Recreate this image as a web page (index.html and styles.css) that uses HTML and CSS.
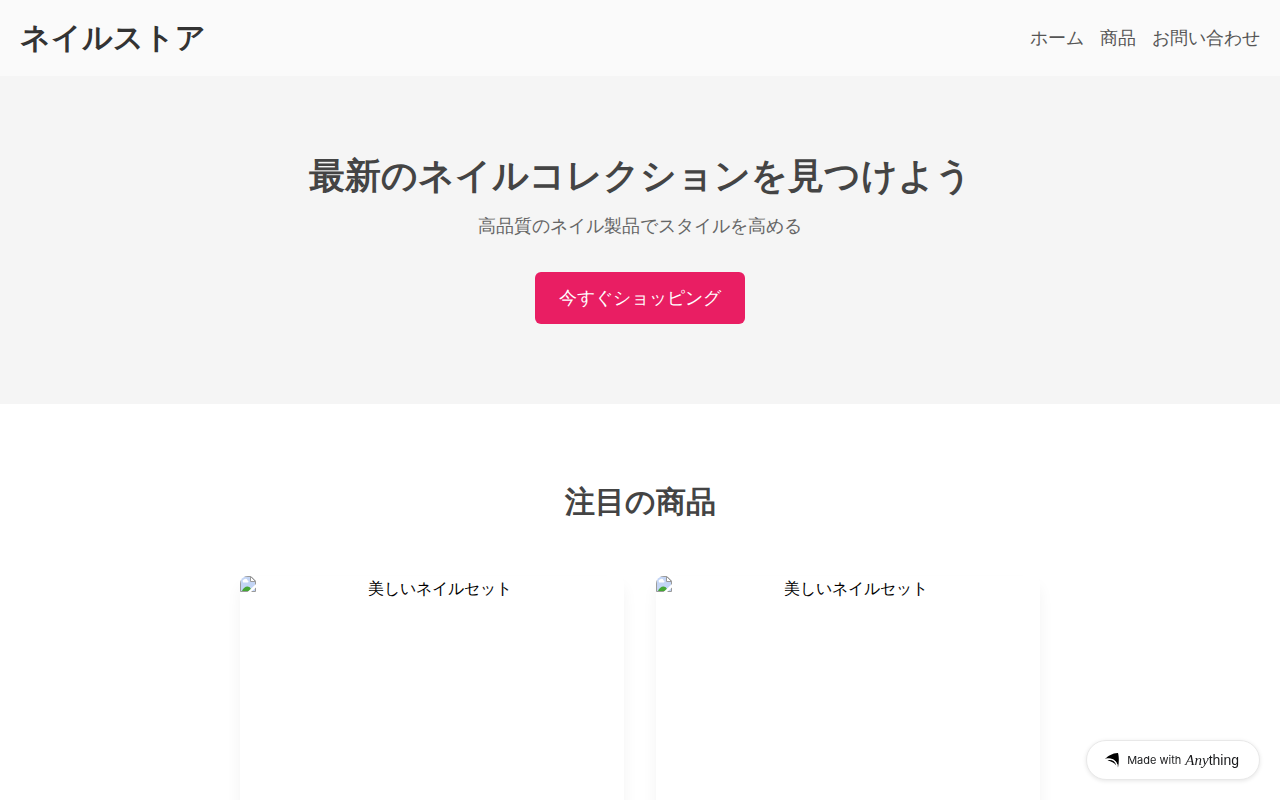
FILE: index.html
```html
<!DOCTYPE html>
<html lang="ja">
<head>
    <meta charset="UTF-8">
    <meta name="viewport" content="width=device-width, initial-scale=1.0">
    <title>ネイルストア</title>
    <link rel="stylesheet" href="styles.css">
</head>
<body>
    <header>
        <h1>ネイルストア</h1>
        <nav>
            <a href="#home">ホーム</a>
            <a href="#products">商品</a>
            <a href="#contact">お問い合わせ</a>
        </nav>
    </header>

    <section id="home" class="hero">
        <h2>最新のネイルコレクションを見つけよう</h2>
        <p>高品質のネイル製品でスタイルを高める</p>
        <button type="button">今すぐショッピング</button>
    </section>

    <section id="products" class="products">
        <h2>注目の商品</h2>
        <div class="product-grid">
            <div class="product-card">
                <div class="product-image">
                    <svg class="missing-icon" viewBox="0 0 16 16" aria-hidden="true">
                        <path d="M.5 .5H11L15.5 5V15.5H.5Z" fill="#c3d5f5" stroke="#9a9a9a"/>
                        <path d="M3 6a1.5 1.5 0 0 1 1-2.500a2 2 0 0 1 3.500 1a1 1 0 0 1 0 2H3z" fill="#fff"/>
                        <path d="M2 15c2-5 7-6 9-2v2z" fill="#45a735"/>
                        <path d="M10.500 .5V5.500H15.500z" fill="#fff" stroke="#9a9a9a"/>
                        <path d="M7.500 16L16 8V11.500L11 16z" fill="#fff"/>
                    </svg>
                    美しいネイルセット
                </div>
            </div>
            <div class="product-card">
                <div class="product-image">
                    <svg class="missing-icon" viewBox="0 0 16 16" aria-hidden="true">
                        <path d="M.5 .5H11L15.5 5V15.5H.5Z" fill="#c3d5f5" stroke="#9a9a9a"/>
                        <path d="M3 6a1.5 1.5 0 0 1 1-2.500a2 2 0 0 1 3.500 1a1 1 0 0 1 0 2H3z" fill="#fff"/>
                        <path d="M2 15c2-5 7-6 9-2v2z" fill="#45a735"/>
                        <path d="M10.500 .5V5.500H15.500z" fill="#fff" stroke="#9a9a9a"/>
                        <path d="M7.500 16L16 8V11.500L11 16z" fill="#fff"/>
                    </svg>
                    美しいネイルセット
                </div>
            </div>
        </div>
    </section>

    <a class="badge" href="#home">
        <svg class="badge-icon" viewBox="0 0 14 16" aria-hidden="true">
            <path d="M0 7C3 4 8 .8 13 1C14.200 5 14 11 13 15.500C12.500 10 8 5 0 7Z"/>
            <path d="M2.500 8.300C7 7.500 10 9 11.300 13.500C9 10.500 6.500 9.500 2.500 8.300Z"/>
            <path d="M1 7.300C7 6 11 8.500 12.300 13.500" fill="none" stroke="#fff"/>
        </svg>
        <span class="badge-text">Made with</span>
        <span class="wordmark"><i>Any</i>thing</span>
    </a>
</body>
</html>
```
FILE: styles.css
```css
* {
    box-sizing: border-box;
}
body {
    font-family: "Liberation Sans", sans-serif;
    margin: 0;
    font-size: 16px;
    line-height: 26px;
    background-color: #fff;
    color: #000;
}
h1, h2, p {
    margin: 0;
}
header {
    display: flex;
    justify-content: space-between;
    align-items: center;
    padding: 20px;
    background-color: #fafafa;
}
header h1 {
    font-size: 30px;
    line-height: 36px;
    font-weight: 700;
    color: #333;
}
nav {
    display: flex;
    gap: 16px;
}
nav a {
    font-size: 18px;
    line-height: 28px;
    color: #555;
    text-decoration: none;
}
nav a:hover {
    color: #e91e63;
}
.hero {
    padding: 80px 20px;
    text-align: center;
    background-color: #f5f5f5;
}
.hero h2 {
    margin-bottom: 16px;
    font-size: 36px;
    line-height: 40px;
    font-weight: 700;
    color: #444;
}
.hero p {
    margin-bottom: 32px;
    font-size: 18px;
    line-height: 28px;
    color: #666;
}
.hero button {
    display: block;
    margin: 0 auto;
    padding: 12px 24px;
    font-family: inherit;
    font-size: 18px;
    line-height: 28px;
    border: none;
    border-radius: 6px;
    background-color: #e91e63;
    color: #fff;
    cursor: pointer;
}
.products {
    padding: 80px 20px;
    text-align: center;
}
.products > h2 {
    margin-bottom: 56px;
    font-size: 30px;
    line-height: 36px;
    font-weight: 700;
    color: #444;
}
.product-grid {
    display: grid;
    grid-template-columns: 1fr 1fr;
    gap: 32px;
    max-width: 800px;
    margin: 0 auto;
}
.product-card {
    overflow: hidden;
    border-radius: 8px;
    background-color: #fff;
    box-shadow: 0 10px 15px rgba(0, 0, 0, 0.05);
}
.product-image {
    min-height: 384px;
}
.missing-icon {
    float: left;
    width: 16px;
    height: 16px;
}
.badge {
    position: fixed;
    right: 20px;
    bottom: 20px;
    display: flex;
    align-items: center;
    height: 40px;
    padding: 0 20px 0 18px;
    border: 1px solid #e8e8e8;
    border-radius: 20px;
    background-color: #fff;
    color: #18191b;
    text-decoration: none;
    box-shadow: 0 1px 4px rgba(0, 0, 0, 0.1);
}
.badge-icon {
    width: 14px;
    height: 16px;
    margin-right: 8px;
}
.badge-text {
    margin-right: 4px;
    font-family: Inter, sans-serif;
    font-size: 11px;
}
.wordmark {
    font-size: 14px;
}
.wordmark i {
    font-family: "Liberation Serif", serif;
    font-size: 15px;
}
```
